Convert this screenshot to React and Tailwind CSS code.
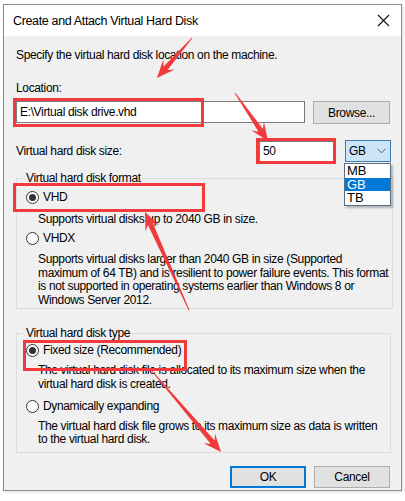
import React from 'react';

const FONT = "font-['Liberation_Sans',Arial,sans-serif]";

// tapered annotation arrow, tail -> tip
function arrowPoints(tx, ty, px, py, headLen = 18, headW = 7.5, shaftW = 2.6) {
  const len = Math.hypot(px - tx, py - ty);
  const dx = (px - tx) / len;
  const dy = (py - ty) / len;
  const nx = -dy;
  const ny = dx;
  const bx = px - dx * headLen;
  const by = py - dy * headLen;
  const sx = px - dx * headLen * 0.72;
  const sy = py - dy * headLen * 0.72;
  const pts = [
    [tx + nx * 0.4, ty + ny * 0.4],
    [sx + nx * shaftW, sy + ny * shaftW],
    [bx + nx * headW, by + ny * headW],
    [px, py],
    [bx - nx * headW, by - ny * headW],
    [sx - nx * shaftW, sy - ny * shaftW],
    [tx - nx * 0.4, ty - ny * 0.4],
  ];
  return pts.map(([x, y]) => `${x.toFixed(1)},${y.toFixed(1)}`).join(' ');
}

const ARROWS = [
  [192, 38, 157, 78],
  [235, 93, 268, 141],
  [189, 310, 145, 212],
  [152, 371, 221, 452],
];

const BOXES = [
  { x: 14.5, y: 99.5, w: 188, h: 26 },
  { x: 257.5, y: 139.5, w: 77, h: 23 },
  { x: 14.5, y: 184.5, w: 189, h: 26 },
  { x: 24.5, y: 341.5, w: 161, h: 28 },
];

function Radio({ checked, label }) {
  return (
    <div className="flex items-center h-[16px]">
      <span className="w-[13px] h-[13px] rounded-full border border-[#333] bg-white flex items-center justify-center shrink-0">
        {checked && <span className="w-[7px] h-[7px] rounded-full bg-[#333]" />}
      </span>
      <span className="ml-[4px]">{label}</span>
    </div>
  );
}

function Button({ children, primary }) {
  return (
    <div
      className={`w-[76px] h-[22px] flex items-center justify-center bg-[#e1e1e1] ${
        primary ? 'border-2 border-[#0078d7]' : 'border border-[#adadad]'
      }`}
    >
      {children}
    </div>
  );
}

export default function App() {
  return (
    <div className={`relative w-[405px] h-[501px] bg-white overflow-hidden whitespace-nowrap text-[12px] leading-[16px] text-black tracking-[-0.35px] ${FONT}`}>
      {/* Dialog */}
      <div className="ml-[3px] mt-[4px] w-[399px] h-[487px] border border-[#8c8c8c] flex flex-col shadow-[1px_1px_3px_rgba(0,0,0,0.15)]">
        {/* Title bar */}
        <div className="h-[31px] bg-white flex items-center justify-between pl-[9px] pr-[10px] shrink-0">
          <span className="text-[12.5px]">Create and Attach Virtual Hard Disk</span>
          <svg width="13" height="13" viewBox="0 0 13 13" className="mr-[1px]">
            <path d="M1 1 L12 12 M12 1 L1 12" stroke="#111" strokeWidth="1.1" fill="none" />
          </svg>
        </div>

        {/* Body */}
        <div className="flex-1 bg-[#f0f0f0] pl-[12px] pr-[10px] pt-[11px] flex flex-col">
          <div>Specify the virtual hard disk location on the machine.</div>

          <div className="mt-[17px]">Location:</div>
          <div className="mt-[5px] flex items-start">
            <div className="w-[289px] h-[22px] bg-white border border-[#7a7a7a] flex items-center pl-[3px]">
              E:\Virtual disk drive.vhd
            </div>
            <div className="ml-[8px] w-[77px] h-[23px] bg-[#e1e1e1] border border-[#adadad] flex items-center justify-center">
              Browse...
            </div>
          </div>

          <div className="mt-[16px] flex items-center h-[22px]">
            <span className="flex-1">Virtual hard disk size:</span>
            <div className="w-[76px] h-[21px] bg-white border border-[#7a7a7a] flex items-center pl-[3px]">50</div>
            <div className="ml-[10px] w-[46px] h-[22px] bg-[#cce4f7] border border-[#3d7ab8] flex items-center justify-between pl-[3px] pr-[4px]">
              <span>GB</span>
              <svg width="9" height="6" viewBox="0 0 9 6">
                <path d="M0.5 0.8 L4.5 4.8 L8.5 0.8" stroke="#555" strokeWidth="1" fill="none" />
              </svg>
            </div>
          </div>

          {/* Format group */}
          <fieldset className="mt-[8px] border border-[#dcdcdc] pl-[9px] pr-[4px] pb-[1px]">
            <legend className="-ml-px px-[1px]">Virtual hard disk format</legend>
            <div className="mt-[3px]">
              <Radio checked label="VHD" />
            </div>
            <div className="mt-[6px] pl-[12px]">Supports virtual disks up to 2040 GB in size.</div>
            <div className="mt-[3px]">
              <Radio label="VHDX" />
            </div>
            <div className="mt-[7px] pl-[12px] leading-[13.6px]">
              Supports virtual disks larger than 2040 GB in size (Supported
              <br />
              maximum of 64 TB) and is resilient to power failure events. This format
              <br />
              is not supported in operating systems earlier than Windows 8 or
              <br />
              Windows Server 2012.
            </div>
          </fieldset>

          {/* Type group */}
          <fieldset className="mt-[16px] border border-[#dcdcdc] pl-[9px] pr-[4px] pb-[6px]">
            <legend className="-ml-px px-[1px]">Virtual hard disk type</legend>
            <div className="mt-[1px]">
              <Radio checked label="Fixed size (Recommended)" />
            </div>
            <div className="mt-[5px] pl-[12px] leading-[14px]">
              The virtual hard disk file is allocated to its maximum size when the
              <br />
              virtual hard disk is created.
            </div>
            <div className="mt-[7px]">
              <Radio label="Dynamically expanding" />
            </div>
            <div className="mt-[6px] pl-[12px] leading-[13px]">
              The virtual hard disk file grows to its maximum size as data is written
              <br />
              to the virtual hard disk.
            </div>
          </fieldset>

          <div className="mt-[13px] flex justify-end gap-[8px] pr-[1px]">
            <Button primary>OK</Button>
            <Button>Cancel</Button>
          </div>
        </div>
      </div>

      {/* Open dropdown list */}
      <div className="absolute left-[344px] top-[163px] w-[47px] border border-[#5a6f86] bg-white shadow-[2px_2px_2px_rgba(0,0,0,0.25)] text-[13px] leading-[13.7px] tracking-normal">
        <div className="pl-[2px]">MB</div>
        <div className="pl-[2px] bg-[#0078d7] text-white">GB</div>
        <div className="pl-[2px]">TB</div>
      </div>

      {/* Annotations */}
      <svg className="absolute inset-0 pointer-events-none" width="405" height="501">
        {BOXES.map((b, i) => (
          <rect key={i} x={b.x} y={b.y} width={b.w} height={b.h} fill="none" stroke="#f2393b" strokeWidth="3" />
        ))}
        {ARROWS.map((a, i) => (
          <polygon key={i} points={arrowPoints(...a)} fill="#f2393b" />
        ))}
      </svg>
    </div>
  );
}
